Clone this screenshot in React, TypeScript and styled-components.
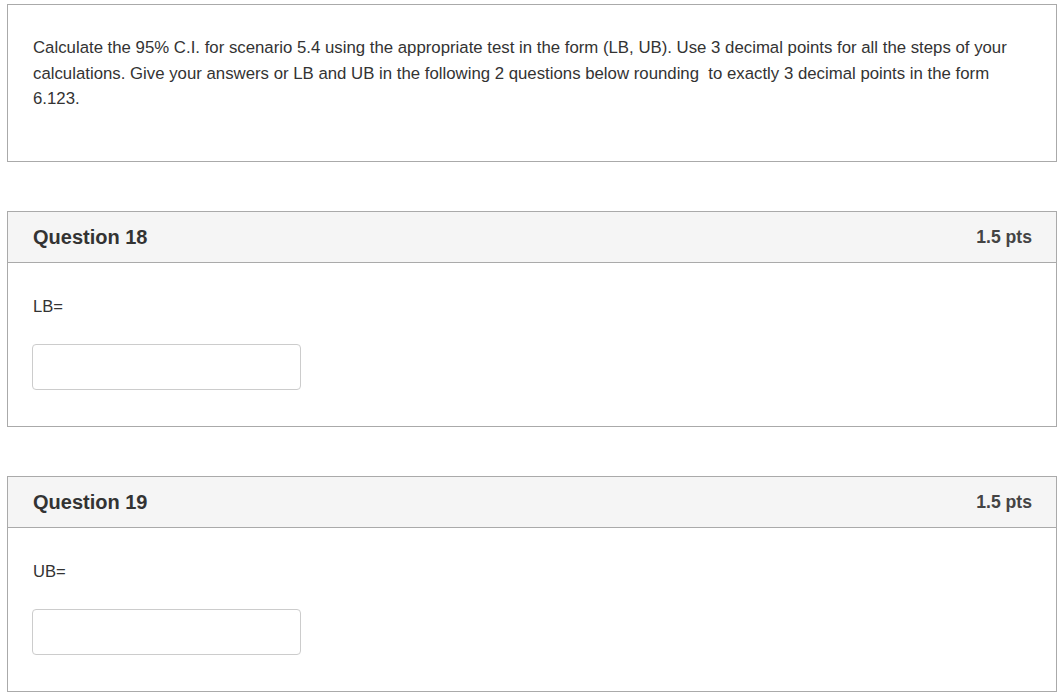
import React from "react";
import styled, { createGlobalStyle } from "styled-components";

const Global = createGlobalStyle`
  html, body { margin: 0; padding: 0; background: #fff; }
  body { font-family: "Liberation Sans", Arial, sans-serif; color: #333; }
`;

const Page = styled.div`
  padding: 4px 6px 8px 7px;
  display: flex;
  flex-direction: column;
  gap: 49px;
`;

const Card = styled.div`
  border: 1px solid #aaa;
  background: #fff;
`;

const Intro = styled.div`
  padding: 30px 25px 49px 25px;
  font-size: 16.8px;
  line-height: 25.5px;
`;

const Header = styled.div`
  display: flex;
  justify-content: space-between;
  align-items: center;
  height: 50px;
  padding: 0 24px 0 25px;
  background: #f5f5f5;
  border-bottom: 1px solid #aaa;
`;

const Title = styled.div`
  font-size: 20px;
  font-weight: bold;
  color: #333;
  padding-top: 1px;
`;

const Points = styled.div`
  font-size: 17.6px;
  font-weight: bold;
  color: #444;
  padding-top: 1px;
`;

const Body = styled.div`
  padding: 34px 25px 36px 25px;
  display: flex;
  flex-direction: column;
  align-items: flex-start;
  gap: 28px;
`;

const Label = styled.div`
  font-size: 16.6px;
  line-height: 19px;
`;

const Input = styled.input`
  box-sizing: border-box;
  width: 269px;
  height: 46px;
  margin-left: -1px;
  border: 1px solid #ccc;
  border-radius: 4px;
  background: #fff;
  font-size: 15px;
  outline: none;
`;

function Question({ n, label }: { n: number; label: string }) {
  return (
    <Card>
      <Header>
        <Title>Question {n}</Title>
        <Points>1.5 pts</Points>
      </Header>
      <Body>
        <Label>{label}</Label>
        <Input type="text" />
      </Body>
    </Card>
  );
}

export default function App() {
  return (
    <>
      <Global />
      <Page>
        <Card>
          <Intro>
            Calculate the 95% C.I. for scenario 5.4 using the appropriate test in the form (LB, UB). Use 3 decimal points for all the steps of your calculations. Give your answers or LB and UB in the following 2 questions below rounding&nbsp; to exactly 3 decimal points in the form 6.123.
          </Intro>
        </Card>
        <Question n={18} label="LB=" />
        <Question n={19} label="UB=" />
      </Page>
    </>
  );
}
